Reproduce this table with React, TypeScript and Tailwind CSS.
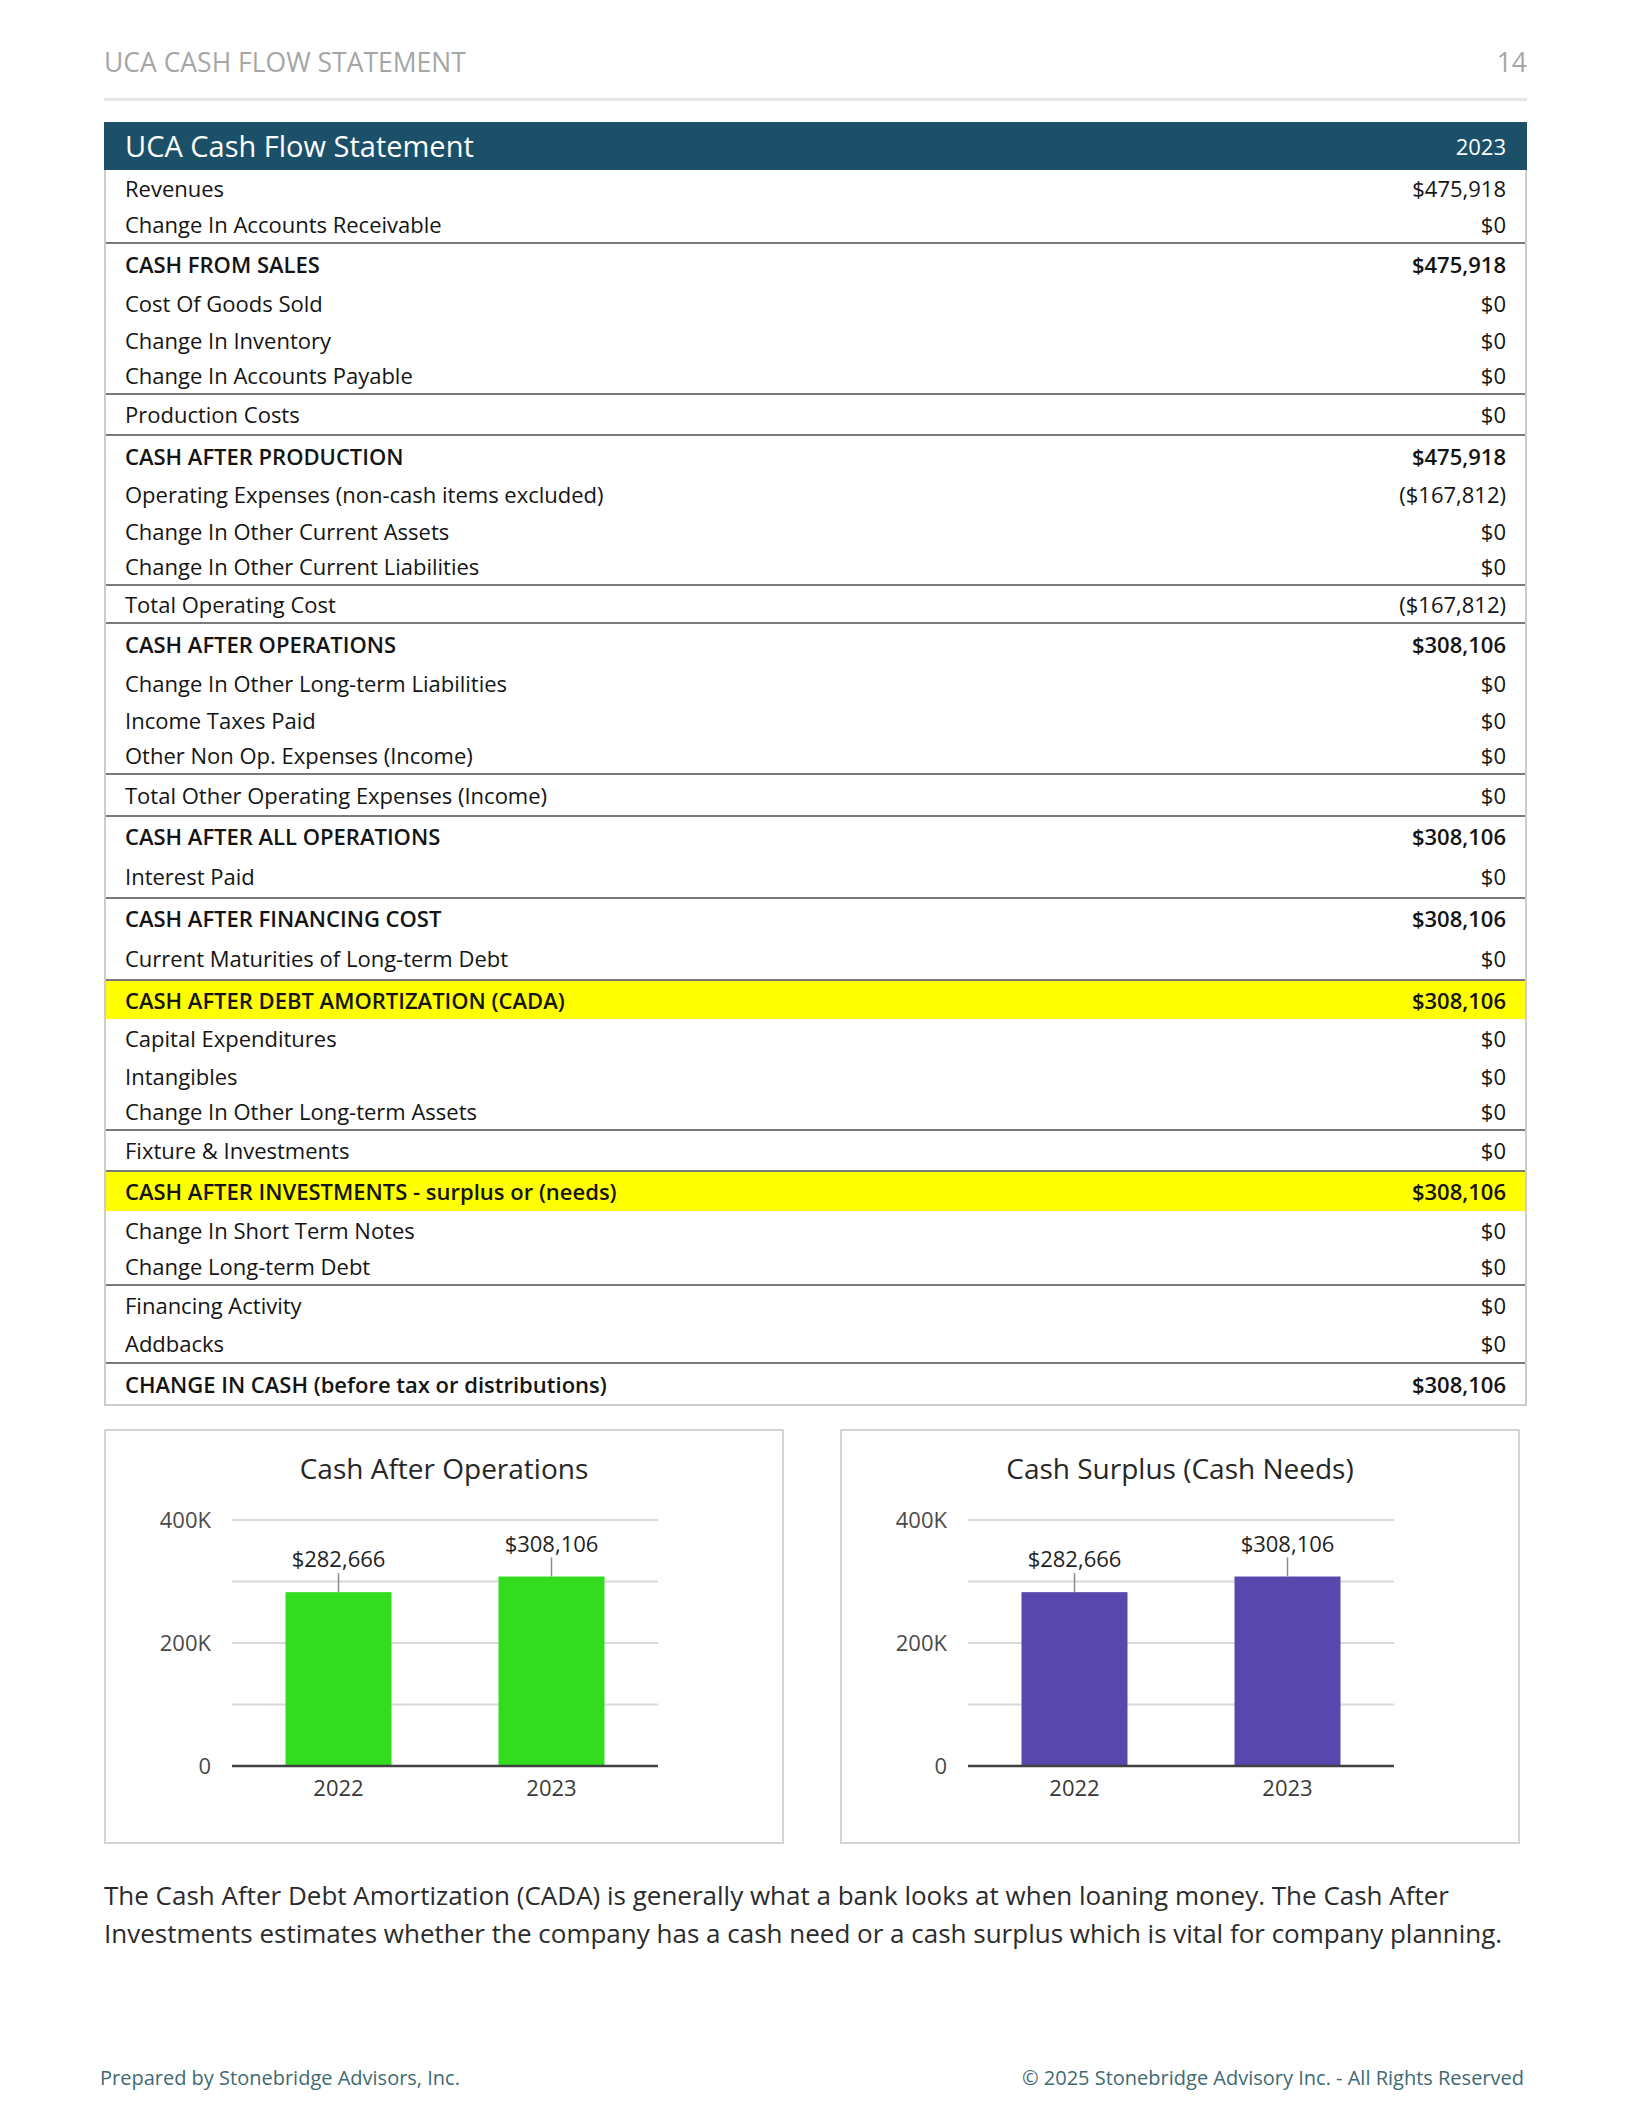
type Line = {
  label: string;
  value: string;
  h: string;
  bold?: boolean;
  rule?: boolean;
  hl?: boolean;
};

const lines: Line[] = [
  { label: "Revenues", value: "$475,918", h: "h-[37px]" },
  { label: "Change In Accounts Receivable", value: "$0", h: "h-[35px]" },
  { label: "CASH FROM SALES", value: "$475,918", h: "h-[42px]", bold: true, rule: true },
  { label: "Cost Of Goods Sold", value: "$0", h: "h-[38px]" },
  { label: "Change In Inventory", value: "$0", h: "h-[36px]" },
  { label: "Change In Accounts Payable", value: "$0", h: "h-[35px]" },
  { label: "Production Costs", value: "$0", h: "h-[41px]", rule: true },
  { label: "CASH AFTER PRODUCTION", value: "$475,918", h: "h-[42px]", bold: true, rule: true },
  { label: "Operating Expenses (non-cash items excluded)", value: "($167,812)", h: "h-[37px]" },
  { label: "Change In Other Current Assets", value: "$0", h: "h-[36px]" },
  { label: "Change In Other Current Liabilities", value: "$0", h: "h-[35px]" },
  { label: "Total Operating Cost", value: "($167,812)", h: "h-[38px]", rule: true },
  { label: "CASH AFTER OPERATIONS", value: "$308,106", h: "h-[42px]", bold: true, rule: true },
  { label: "Change In Other Long-term Liabilities", value: "$0", h: "h-[38px]" },
  { label: "Income Taxes Paid", value: "$0", h: "h-[36px]" },
  { label: "Other Non Op. Expenses (Income)", value: "$0", h: "h-[35px]" },
  { label: "Total Other Operating Expenses (Income)", value: "$0", h: "h-[42px]", rule: true },
  { label: "CASH AFTER ALL OPERATIONS", value: "$308,106", h: "h-[41px]", bold: true, rule: true },
  { label: "Interest Paid", value: "$0", h: "h-[41px]" },
  { label: "CASH AFTER FINANCING COST", value: "$308,106", h: "h-[41px]", bold: true, rule: true },
  { label: "Current Maturities of Long-term Debt", value: "$0", h: "h-[41px]" },
  { label: "CASH AFTER DEBT AMORTIZATION (CADA)", value: "$308,106", h: "h-[40px]", bold: true, rule: true, hl: true },
  { label: "Capital Expenditures", value: "$0", h: "h-[39px]" },
  { label: "Intangibles", value: "$0", h: "h-[36px]" },
  { label: "Change In Other Long-term Assets", value: "$0", h: "h-[35px]" },
  { label: "Fixture & Investments", value: "$0", h: "h-[41px]", rule: true },
  { label: "CASH AFTER INVESTMENTS - surplus or (needs)", value: "$308,106", h: "h-[41px]", bold: true, rule: true, hl: true },
  { label: "Change In Short Term Notes", value: "$0", h: "h-[38px]" },
  { label: "Change Long-term Debt", value: "$0", h: "h-[35px]" },
  { label: "Financing Activity", value: "$0", h: "h-[40px]", rule: true },
  { label: "Addbacks", value: "$0", h: "h-[38px]" },
  { label: "CHANGE IN CASH (before tax or distributions)", value: "$308,106", h: "h-[42px]", bold: true, rule: true },
];

// plot geometry, relative to the svg (box inner area below the title)
const X0 = 126;
const X1 = 552;
const Y0 = 261; // zero line
const STEP = 61.5; // per 100K

function yOf(v: number) {
  return Y0 - (v / 100000) * STEP;
}

function BarChart({ title, color }: { title: string; color: string }) {
  const data = [
    { year: "2022", v: 282666, label: "$282,666" },
    { year: "2023", v: 308106, label: "$308,106" },
  ];
  const slot = (X1 - X0) / 2;
  return (
    <div className="w-[680px] h-[415px] border-2 border-[#d4d4d4] flex flex-col">
      <div className="h-[74px] flex items-center justify-center text-[28px] text-[#262626]">{title}</div>
      <svg width="676" height="337" overflow="visible" className="block">
        {[1, 2, 3, 4].map((k) => (
          <line key={k} x1={X0} x2={X1} y1={yOf(k * 100000)} y2={yOf(k * 100000)} stroke="#d9d9d9" strokeWidth="2" />
        ))}
        {data.map((d, i) => {
          const cx = X0 + slot * i + slot / 2;
          const top = yOf(d.v);
          const ly = top - 25;
          return (
            <g key={d.year}>
              <rect x={cx - 53} y={top} width="106" height={Y0 - top} fill={color} />
              <line x1={cx} x2={cx} y1={ly + 6} y2={top} stroke="#8c8c8c" strokeWidth="1.5" />
              <text x={cx} y={ly} textAnchor="middle" fontSize="22" fill="#1f1f1f" fontFamily="Open Sans">
                {d.label}
              </text>
              <text x={cx} y={Y0 + 30} textAnchor="middle" fontSize="22" fill="#3a3a3a" fontFamily="Open Sans">
                {d.year}
              </text>
            </g>
          );
        })}
        <line x1={X0} x2={X1} y1={Y0} y2={Y0} stroke="#404040" strokeWidth="2.5" />
        {[
          { v: 400000, t: "400K" },
          { v: 200000, t: "200K" },
          { v: 0, t: "0" },
        ].map((a) => (
          <text key={a.t} x="105" y={yOf(a.v) + 8} textAnchor="end" fontSize="22" fill="#4a4a4a" fontFamily="Open Sans">
            {a.t}
          </text>
        ))}
      </svg>
    </div>
  );
}

export default function App() {
  return (
    <div className="w-[1631px] h-[2113px] bg-white font-['Open_Sans',sans-serif] px-[104px] flex flex-col">
      <div className="pt-[44px] h-[79px] flex justify-between items-start text-[26.5px] leading-[36px] text-[#a6a6a6]">
        <span>UCA CASH FLOW STATEMENT</span>
        <span>14</span>
      </div>
      <div className="mt-[19px] h-[3px] bg-[#e6e6e6]" />

      <div className="mt-[21px]">
        <div className="h-[48px] bg-[#1c5069] flex items-center justify-between pl-[21px] pr-[21px] text-white">
          <span className="text-[29px]">UCA Cash Flow Statement</span>
          <span className="text-[22px]">2023</span>
        </div>
        <div className="border-x-2 border-b-2 border-[#cccccc]">
          {lines.map((r) => (
            <div
              key={r.label}
              className={`${r.h} flex items-center justify-between pl-[19px] pr-[19px] text-[22px] text-[#141414] ${
                r.rule ? "border-t-2 border-[#7a7a7a]" : ""
              } ${r.bold ? "font-semibold" : ""} ${r.hl ? "bg-[#ffff00]" : ""}`}
            >
              <span>{r.label}</span>
              <span>{r.value}</span>
            </div>
          ))}
        </div>
      </div>

      <div className="mt-[23px] flex gap-[56px]">
        <BarChart title="Cash After Operations" color="#33dc1f" />
        <BarChart title="Cash Surplus (Cash Needs)" color="#5847ad" />
      </div>

      <p className="mt-[32px] text-[26px] leading-[38px] text-[#2b2b2b] whitespace-nowrap">
        The Cash After Debt Amortization (CADA) is generally what a bank looks at when loaning money. The Cash After
        <br />
        Investments estimates whether the company has a cash need or a cash surplus which is vital for company planning.
      </p>

      <div className="mt-[113px] flex justify-between text-[20px] leading-[26px] text-[#3f6a72]">
        <span className="-ml-[4px]">Prepared by Stonebridge Advisors, Inc.</span>
        <span className="mr-[3px]">© 2025 Stonebridge Advisory Inc. - All Rights Reserved</span>
      </div>
    </div>
  );
}
